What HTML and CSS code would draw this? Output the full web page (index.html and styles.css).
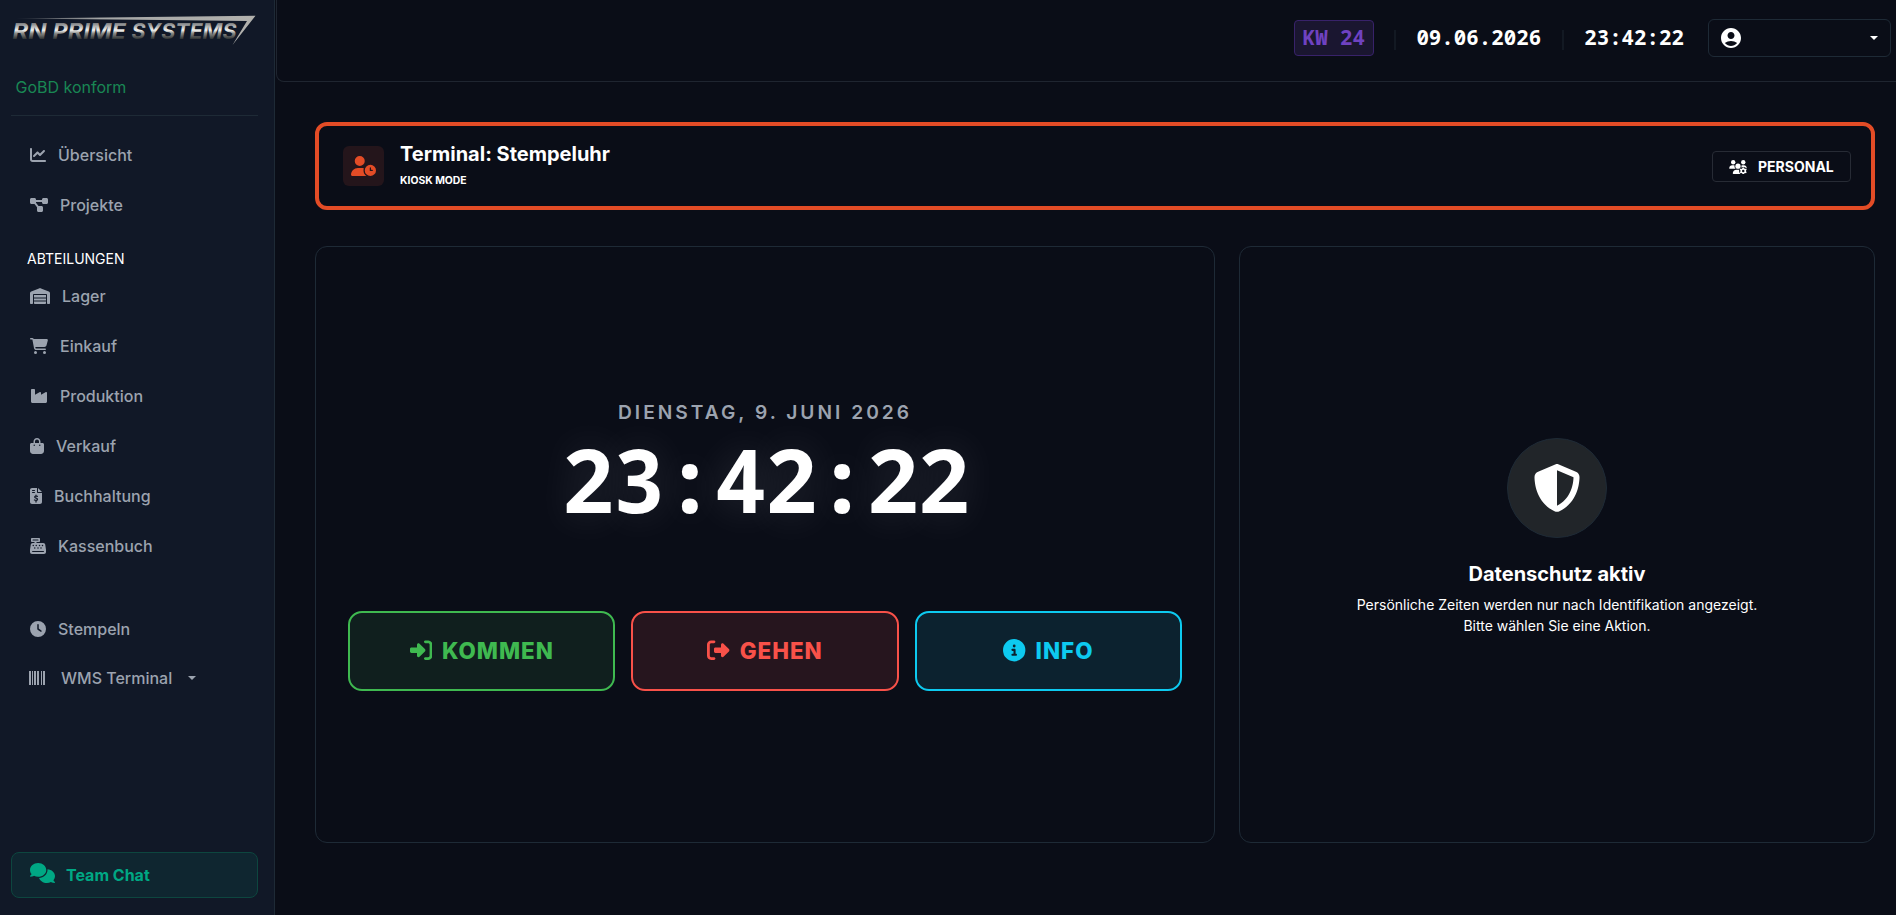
FILE: index.html
```html
<!DOCTYPE html>
<html lang="de">
<head>
<meta charset="utf-8">
<title>Terminal: Stempeluhr</title>
<link rel="stylesheet" href="styles.css">
</head>
<body>
<div class="app">
  <aside class="sidebar">
    <svg class="logo" viewBox="0 0 248 40" width="248" height="40">
      <defs>
        <linearGradient id="chrome" x1="0" y1="0" x2="0" y2="1">
          <stop offset=".2" stop-color="#77797c"/>
          <stop offset=".48" stop-color="#f2f2ef"/>
          <stop offset=".6" stop-color="#8b8b88"/>
          <stop offset=".82" stop-color="#2d3132"/>
        </linearGradient>
        <linearGradient id="blade" x1="0" y1="0" x2="1" y2="0">
          <stop offset="0" stop-color="#333944"/>
          <stop offset=".35" stop-color="#a5a6a6"/>
          <stop offset="1" stop-color="#b2b1ad"/>
        </linearGradient>
      </defs>
      <path d="M5 10.500 L244.500 7.700 L221.500 37 L236 13 L150 12 Z" fill="url(#blade)"/>
      <g class="logo-text" fill="url(#chrome)">
        <text x="1.500" y="30.700" textLength="34" lengthAdjust="spacingAndGlyphs">RN</text>
        <text x="41.500" y="30.700" textLength="73.500" lengthAdjust="spacingAndGlyphs">PRIME</text>
        <text x="120.500" y="30.700" textLength="105" lengthAdjust="spacingAndGlyphs">SYSTEMS</text>
      </g>
    </svg>
    <div class="gobd">GoBD konform</div>
    <nav class="nav">
      <a class="item"><svg width="16" height="16" viewBox="0 0 512 512"><path d="M64 64c0-17.700-14.300-32-32-32S0 46.300 0 64V400c0 44.200 35.800 80 80 80H480c17.700 0 32-14.300 32-32s-14.300-32-32-32H80c-8.800 0-16-7.200-16-16V64zm406.600 86.600c12.500-12.500 12.500-32.800 0-45.300s-32.800-12.500-45.300 0L320 210.700l-57.400-57.400c-12.500-12.500-32.800-12.500-45.300 0l-112 112c-12.500 12.500-12.500 32.800 0 45.300s32.800 12.500 45.300 0L240 221.300l57.400 57.400c12.500 12.500 32.800 12.500 45.300 0l128-128z"/></svg>Übersicht</a>
      <a class="item"><svg width="18" height="16" viewBox="0 0 576 512"><path d="M0 80C0 53.500 21.500 32 48 32h96c26.500 0 48 21.500 48 48V96H384V80c0-26.500 21.500-48 48-48h96c26.500 0 48 21.500 48 48v96c0 26.500-21.500 48-48 48H432c-26.500 0-48-21.500-48-48V160H192v16c0 1.700-.1 3.400-.3 5L272 288h96c26.500 0 48 21.500 48 48v96c0 26.500-21.500 48-48 48H272c-26.500 0-48-21.500-48-48V336c0-1.700 .1-3.400 .3-5L144 224H48c-26.500 0-48-21.500-48-48V80z"/></svg>Projekte</a>
      <div class="heading">ABTEILUNGEN</div>
      <a class="item"><svg width="20" height="16" viewBox="0 0 640 512"><path d="M0 488V171.300c0-26.200 15.900-49.700 40.200-59.400L308.100 4.800c7.600-3.100 16.100-3.100 23.800 0L599.800 111.900c24.300 9.700 40.200 33.300 40.200 59.400V488c0 13.300-10.700 24-24 24H568c-13.300 0-24-10.700-24-24V224c0-17.700-14.300-32-32-32H128c-17.700 0-32 14.300-32 32V488c0 13.300-10.700 24-24 24H24c-13.300 0-24-10.700-24-24zm488 24l-336 0c-13.300 0-24-10.700-24-24V432H512l0 56c0 13.300-10.700 24-24 24zM128 400V336H512v64H128zm0-96V224H512l0 80H128z"/></svg>Lager</a>
      <a class="item"><svg width="18" height="16" viewBox="0 0 576 512"><path d="M0 24C0 10.700 10.700 0 24 0H69.500c22 0 41.500 12.800 50.600 32h411c26.300 0 45.500 25 38.600 50.400l-41 152.300c-8.500 31.400-37 53.300-69.500 53.300H170.700l5.400 28.500c2.200 11.300 12.100 19.500 23.600 19.500H488c13.300 0 24 10.700 24 24s-10.700 24-24 24H199.700c-34.600 0-64.300-24.600-70.700-58.500L77.400 54.500c-.7-3.800-4-6.500-7.900-6.500H24C10.700 48 0 37.300 0 24zM128 464a48 48 0 1 1 96 0 48 48 0 1 1 -96 0zm336-48a48 48 0 1 1 0 96 48 48 0 1 1 0-96z"/></svg>Einkauf</a>
      <a class="item"><svg width="18" height="16" viewBox="0 0 576 512"><path d="M64 32C46.300 32 32 46.300 32 64V304v48 80c0 26.500 21.500 48 48 48H496c26.500 0 48-21.500 48-48V304 152.200c0-18.200-19.400-29.700-35.400-21.100L352 215.400V152.200c0-18.200-19.400-29.700-35.400-21.100L160 215.400V64c0-17.700-14.300-32-32-32H64z"/></svg>Produktion</a>
      <a class="item"><svg width="14" height="16" viewBox="0 0 448 512"><path d="M160 112c0-35.300 28.700-64 64-64s64 28.700 64 64v48H160V112zm-48 48H48c-26.500 0-48 21.500-48 48V416c0 53 43 96 96 96H352c53 0 96-43 96-96V208c0-26.500-21.500-48-48-48H336V112C336 50.100 285.900 0 224 0S112 50.100 112 112v48zm24 48a24 24 0 1 1 0 48 24 24 0 1 1 0-48zm152 24a24 24 0 1 1 48 0 24 24 0 1 1 -48 0z"/></svg>Verkauf</a>
      <a class="item"><svg width="12" height="16" viewBox="0 0 384 512"><path fill-rule="evenodd" d="M64 0C28.700 0 0 28.700 0 64V448c0 35.300 28.700 64 64 64H320c35.300 0 64-28.700 64-64V160H256c-17.700 0-32-14.300-32-32V0H64zM256 0V128H384L256 0zM80 64h64a16 16 0 0 1 0 32H80a16 16 0 0 1 0-32zm0 64h64a16 16 0 0 1 0 32H80a16 16 0 0 1 0-32z"/><path class="cut" d="M192 228v28m0 164v28M238 268c-28-12-88-20-88 20 0 44 90 26 90 72 0 44-64 40-98 22"/></svg>Buchhaltung</a>
      <a class="item"><svg width="16" height="16" viewBox="0 0 512 512"><path fill-rule="evenodd" d="M64 0C46.300 0 32 14.300 32 32V96c0 17.700 14.300 32 32 32h80v32H87c-31.600 0-58.500 23.100-63.300 54.400L1.100 364.100C.4 368.800 0 373.600 0 378.400V448c0 35.300 28.700 64 64 64H448c35.300 0 64-28.700 64-64V378.400c0-4.800-.4-9.600-1.100-14.400L488.200 214.400C483.500 183.100 456.600 160 425 160H208V128h80c17.700 0 32-14.300 32-32V32c0-17.700-14.300-32-32-32H64zM96 48H256a16 16 0 0 1 0 32H96a16 16 0 0 1 0-32zM64 432c0-8.800 7.200-16 16-16H432a16 16 0 0 1 0 32H80c-8.800 0-16-7.200-16-16zM104 216a24 24 0 1 1 0 48 24 24 0 0 1 0-48zm96 0a24 24 0 1 1 0 48 24 24 0 0 1 0-48zm104 0a24 24 0 1 1 0 48 24 24 0 0 1 0-48zm96 0a24 24 0 1 1 0 48 24 24 0 0 1 0-48zM152 296a24 24 0 1 1 0 48 24 24 0 0 1 0-48zm104 0a24 24 0 1 1 0 48 24 24 0 0 1 0-48zm96 0a24 24 0 1 1 0 48 24 24 0 0 1 0-48z"/></svg>Kassenbuch</a>
      <a class="item item-clock"><svg width="16" height="16" viewBox="0 0 512 512"><path fill-rule="evenodd" d="M256 0a256 256 0 1 1 0 512A256 256 0 1 1 256 0zM232 120V256c0 8 4 15.500 10.700 20l96 64c11 7.400 25.900 4.400 33.300-6.700s4.400-25.900-6.700-33.300L280 243.200V120c0-13.300-10.700-24-24-24s-24 10.700-24 24z"/></svg>Stempeln</a>
      <a class="item item-wms"><svg width="16" height="14" viewBox="0 0 16 14"><path d="M0 0h2v14H0zM3 0h1v14H3zM5 0h2v14H5zM8 0h2v14H8zM12 0h1v14h-1zM14 0h2v14h-2z"/></svg>WMS Terminal<i class="caret"></i></a>
    </nav>
    <a class="chat"><svg width="25" height="20" viewBox="0 0 640 512"><path d="M208 352c114.900 0 208-78.800 208-176S322.900 0 208 0S0 78.800 0 176c0 38.600 14.700 74.300 39.600 103.400c-3.500 9.400-8.700 17.700-14.200 24.700c-4.800 6.200-9.700 11-13.300 14.300c-1.800 1.600-3.300 2.900-4.300 3.700c-.5 .4-.9 .7-1.100 .8l-.2 .2C1 327.200-1.400 334.400 .8 340.900S9.100 352 16 352c21.800 0 43.800-5.600 62.100-12.500c9.200-3.500 17.800-7.400 25.200-11.400C134.100 343.300 169.800 352 208 352zM448 176c0 112.300-99.100 196.900-216.500 207C255.800 457.400 336.400 512 432 512c38.200 0 73.900-8.700 104.700-23.900c7.500 4 16 7.900 25.200 11.400c18.300 6.900 40.300 12.500 62.100 12.500c6.900 0 13.100-4.500 15.200-11.100c2.100-6.600-.2-13.800-5.800-17.900l-.2-.2c-.2-.2-.6-.4-1.100-.8c-1-.8-2.500-2-4.300-3.700c-3.600-3.300-8.500-8.100-13.300-14.300c-5.500-7-10.700-15.400-14.200-24.700c24.900-29 39.600-64.700 39.600-103.400c0-92.800-84.900-168.900-192.600-175.500c.4 5.100 .6 10.300 .6 15.500z"/></svg>Team Chat</a>
  </aside>
  <div class="page">
    <header class="topbar">
      <span class="week">KW 24</span>
      <i class="rule rule-a"></i>
      <span class="stamp">09.06.2026</span>
      <i class="rule rule-b"></i>
      <span class="stamp">23:42:22</span>
      <div class="account"><svg width="20" height="20" viewBox="2 2 20 20"><path d="M12 2C6.480 2 2 6.480 2 12s4.480 10 10 10 10-4.480 10-10S17.520 2 12 2zm0 4c1.930 0 3.500 1.570 3.500 3.500S13.930 13 12 13s-3.500-1.570-3.500-3.500S10.070 6 12 6zm0 14c-2.030 0-4.430-.82-6.140-2.880C7.550 15.800 9.680 15 12 15s4.450.8 6.140 2.120C16.430 19.180 14.030 20 12 20z"/></svg><i class="caret"></i></div>
    </header>
    <main class="content">
      <section class="banner">
        <div class="banner-icon"><svg width="25" height="20" viewBox="0 0 640 512"><path fill-rule="evenodd" d="M224 0a128 128 0 1 1 0 256A128 128 0 1 1 224 0zM178.300 304h91.400c20.600 0 40.400 3.500 58.800 9.900C323 331 320 349.100 320 368c0 59.500 29.500 112.100 74.800 144H29.700C13.300 512 0 498.700 0 482.300C0 383.800 79.800 304 178.300 304zM352 368a144 144 0 1 1 288 0 144 144 0 1 1 -288 0zm144-80c-8.800 0-16 7.200-16 16v64c0 8.800 7.200 16 16 16h48c8.800 0 16-7.200 16-16s-7.200-16-16-16H512V304c0-8.800-7.200-16-16-16z"/></svg></div>
        <div class="banner-text">
          <h1>Terminal: Stempeluhr</h1>
          <small>KIOSK MODE</small>
        </div>
        <a class="staff"><svg width="18" height="14" viewBox="0 0 640 512"><circle cx="144" cy="80" r="80"/><circle cx="512" cy="80" r="80"/><circle cx="320" cy="224" r="96"/><path d="M0 298.700C0 239.800 47.800 192 106.700 192h42.700c15.900 0 31 3.500 44.600 9.700-1.300 7.200-1.900 14.700-1.900 22.300 0 38.200 16.800 72.500 43.300 96H21.300C9.600 320 0 310.400 0 298.700zM405 320H404.700c26.500-23.500 43.300-57.800 43.300-96 0-7.600-.7-15-1.900-22.300 13.600-6.300 28.700-9.700 44.600-9.700h42.700C592.200 192 640 239.800 640 298.700zM128 485.300C128 411.700 187.700 352 261.300 352H369c-16 45 0 120 45 160H154.700c-14.700 0-26.700-11.900-26.700-26.700z"/><path class="gear-disc" d="M512 260a135 135 0 1 1 0 270a135 135 0 1 1 0-270z"/><path fill-rule="evenodd" d="M486 270h52l8 36 32 19 36-12 26 44-28 26v34l28 26-26 44-36-12-32 19-8 36h-52l-8-36-32-19-36 12-26-44 28-26v-34l-28-26 26-44 36 12 32-19zM512 355a45 45 0 1 0 0 90 45 45 0 1 0 0-90z"/></svg>PERSONAL</a>
      </section>
      <div class="columns">
        <section class="card clock-card">
          <div class="date">DIENSTAG, 9. JUNI 2026</div>
          <div class="clock">23:42:22</div>
          <div class="actions">
            <button class="action in"><svg viewBox="0 0 512 512"><path d="M217.900 105.900L340.700 228.700c7.200 7.200 11.300 17.100 11.300 27.300s-4.100 20.100-11.300 27.300L217.900 406.100c-6.400 6.400-15 9.900-24 9.900c-18.700 0-33.900-15.200-33.900-33.900l0-62.100L32 320c-17.700 0-32-14.300-32-32l0-64c0-17.700 14.300-32 32-32l128 0 0-62.100c0-18.700 15.200-33.900 33.900-33.900c9 0 17.600 3.600 24 9.900zM352 416l64 0c17.700 0 32-14.300 32-32l0-256c0-17.700-14.300-32-32-32l-64 0c-17.700 0-32-14.300-32-32s14.300-32 32-32l64 0c53 0 96 43 96 96l0 256c0 53-43 96-96 96l-64 0c-17.700 0-32-14.300-32-32s14.300-32 32-32z"/></svg>KOMMEN</button>
            <button class="action out"><svg viewBox="0 0 512 512"><path d="M377.900 105.900L500.700 228.700c7.200 7.200 11.300 17.100 11.300 27.300s-4.100 20.100-11.300 27.300L377.900 406.100c-6.400 6.400-15 9.900-24 9.900c-18.700 0-33.900-15.200-33.900-33.900l0-62.100-128 0c-17.700 0-32-14.300-32-32l0-64c0-17.700 14.300-32 32-32l128 0 0-62.100c0-18.700 15.200-33.900 33.900-33.900c9 0 17.600 3.600 24 9.900zM160 96L96 96c-17.700 0-32 14.300-32 32l0 256c0 17.700 14.300 32 32 32l64 0c17.700 0 32 14.300 32 32s-14.300 32-32 32l-64 0c-53 0-96-43-96-96L0 128C0 75 43 32 96 32l64 0c17.700 0 32 14.300 32 32s-14.300 32-32 32z"/></svg>GEHEN</button>
            <button class="action info"><svg viewBox="0 0 512 512"><path fill-rule="evenodd" d="M256 512A256 256 0 1 0 256 0a256 256 0 1 0 0 512zM216 336h24V272H216c-13.300 0-24-10.700-24-24s10.700-24 24-24h48c13.300 0 24 10.700 24 24v88h8c13.300 0 24 10.700 24 24s-10.700 24-24 24H216c-13.300 0-24-10.700-24-24s10.700-24 24-24zm40-208a32 32 0 1 1 0 64 32 32 0 1 1 0-64z"/></svg>INFO</button>
          </div>
        </section>
        <section class="card privacy">
          <div class="shield"><svg width="48" height="48" viewBox="0 0 512 512"><path fill-rule="evenodd" d="M256 0c4.600 0 9.200 1 13.400 2.900L457.700 82.800c22 9.300 38.400 31 38.300 57.200c-.5 99.200-41.300 280.700-213.600 363.200c-16.700 8-36.100 8-52.800 0C57.300 420.700 16.500 239.200 16 140c-.1-26.200 16.300-47.900 38.300-57.200L242.700 2.900C246.800 1 251.400 0 256 0zm0 66.800V444.800C394 378 431.100 230.100 432 141.400L256 66.800z"/></svg></div>
          <h2>Datenschutz aktiv</h2>
          <p>Persönliche Zeiten werden nur nach Identifikation angezeigt.<br>Bitte wählen Sie eine Aktion.</p>
        </section>
      </div>
    </main>
  </div>
</div>
</body>
</html>
```
FILE: styles.css
```css
* { box-sizing: border-box; }
body { margin: 0; background: #0a0d17; color: #fff; font: 16px/24px Inter, sans-serif; }
svg { display: block; fill: currentColor; flex: none; }
.app { display: flex; height: 915px; overflow: hidden; }

.sidebar { width: 275px; flex: none; display: flex; flex-direction: column; padding: 8px 16px 17px 11px; background: #111827; border-right: 1px solid #1e2a36; }
.logo-text { font: italic 700 22px Inter, sans-serif; }
.gobd { margin-top: 27px; padding: 0 0 16px 4.5px; height: 41px; color: #198754; border-bottom: 1px solid #1e2a36; }
.nav { display: flex; flex-direction: column; padding-top: 16px; }
.item { height: 46px; margin-bottom: 4px; padding-left: 19px; display: flex; align-items: center; gap: 12px; color: #9ca3af; font-weight: 500; }
.heading { height: 21px; margin: 16px 0 4px 16px; font-size: 14px; line-height: 21px; }
.item-clock { margin-top: 33px; }
.item-wms { margin-top: -1px; padding-left: 18px; gap: 16px; }
.cut { fill: none; stroke: #111827; stroke-width: 40; stroke-linecap: round; }
.caret { border: 4px solid transparent; border-top-color: currentColor; border-bottom: 0; }
.chat { height: 46px; margin-top: auto; padding-left: 18px; display: flex; align-items: center; gap: 11px; border: 1px solid #0d463f; border-radius: 8px; background: #0f2630; color: #00a884; font-weight: 700; }
.chat svg { margin-top: -4px; }

.page { flex: 1; min-width: 0; display: flex; flex-direction: column; }
.topbar { height: 82px; display: flex; justify-content: flex-end; align-items: center; padding: 0 5px 6px 0; border: solid #1f2530; border-width: 0 0 1px 1px; border-bottom-left-radius: 8px; margin-left: 1px; }
.week, .stamp, .clock { font-family: "Noto Sans Mono", "DejaVu Sans Mono", monospace; font-weight: 700; }
.week { height: 36px; width: 80px; padding: 0 1px 1px 0; display: grid; place-items: center; font-size: 20.8px; color: #6f42c1; background: #1a1630; border: 1px solid #38226a; border-radius: 4px; }
.stamp { margin-top: -1px; font-size: 20.8px; }
.rule { width: 2px; height: 20px; background: #131923; }
.rule-a { margin: 4px 20px 0; }
.rule-b { margin: 4px 20px 0 21px; }
.account { width: 183px; height: 38px; margin-left: 24px; padding: 0 12px; display: flex; align-items: center; justify-content: space-between; border: 1px solid #1e2a36; border-radius: 6px; }

.content { padding: 40px 21px 0 39px; }
.banner { height: 88px; margin-left: 1px; display: flex; align-items: center; padding: 0 20px 0 24px; border: 4px solid #e34c26; border-radius: 12px; }
.banner-icon { width: 41px; height: 40px; display: grid; place-items: center; border-radius: 6px; background: #24151b; color: #e34c26; }
.banner-text { margin: -1px auto 0 16px; }
h1 { margin: -1px 0 0; font-size: 20px; line-height: 24px; font-weight: 700; }
small { display: block; margin-top: 7px; font-size: 10.4px; line-height: 16px; font-weight: 700; }
.staff { width: 139px; height: 31px; padding: 1px 0 0 16px; display: flex; align-items: center; gap: 11px; border: 1px solid #272b35; border-radius: 4px; font-size: 14px; font-weight: 700; }
.gear-disc { fill: #0a0d17; }
.columns { display: grid; grid-template-columns: 900px 636px; gap: 24px; margin: 36px 0 0 1px; }
.card { height: 597px; border: 1px solid #1e2a36; border-radius: 12px; display: flex; flex-direction: column; align-items: center; }
.clock-card { padding: 150px 32px 0; }
.date { font-size: 19.2px; line-height: 30px; font-weight: 600; letter-spacing: 3px; color: #9ca3af; }
.clock { margin-top: 8px; height: 88px; line-height: 88px; font-size: 88px; letter-spacing: -2px; text-shadow: 0 0 40px rgba(255,255,255,.14); }
.actions { width: 100%; display: grid; grid-template-columns: repeat(3, 1fr); gap: 16px; margin-top: 88px; }
.action { height: 80px; padding-bottom: 2px; display: flex; align-items: center; justify-content: center; gap: 10px; border: 2px solid currentColor; border-radius: 14px; font: 800 22.4px Inter, sans-serif; letter-spacing: 1px; }
.action svg { width: 1em; height: 1em; }
.in { color: #3fb950; background: #101f1e; }
.out { color: #f85149; background: #26151e; }
.info { color: #0dcaf0; background: #0c222f; }
.privacy { padding-top: 191px; text-align: center; }
.shield { width: 100px; height: 100px; display: grid; place-items: center; border: 1px solid #1e2a36; border-radius: 50%; background: #212529; }
h2 { margin: 24px 0 8px; font-size: 20px; line-height: 24px; font-weight: 700; }
p { margin: 0; font-size: 14px; line-height: 21px; }
```
